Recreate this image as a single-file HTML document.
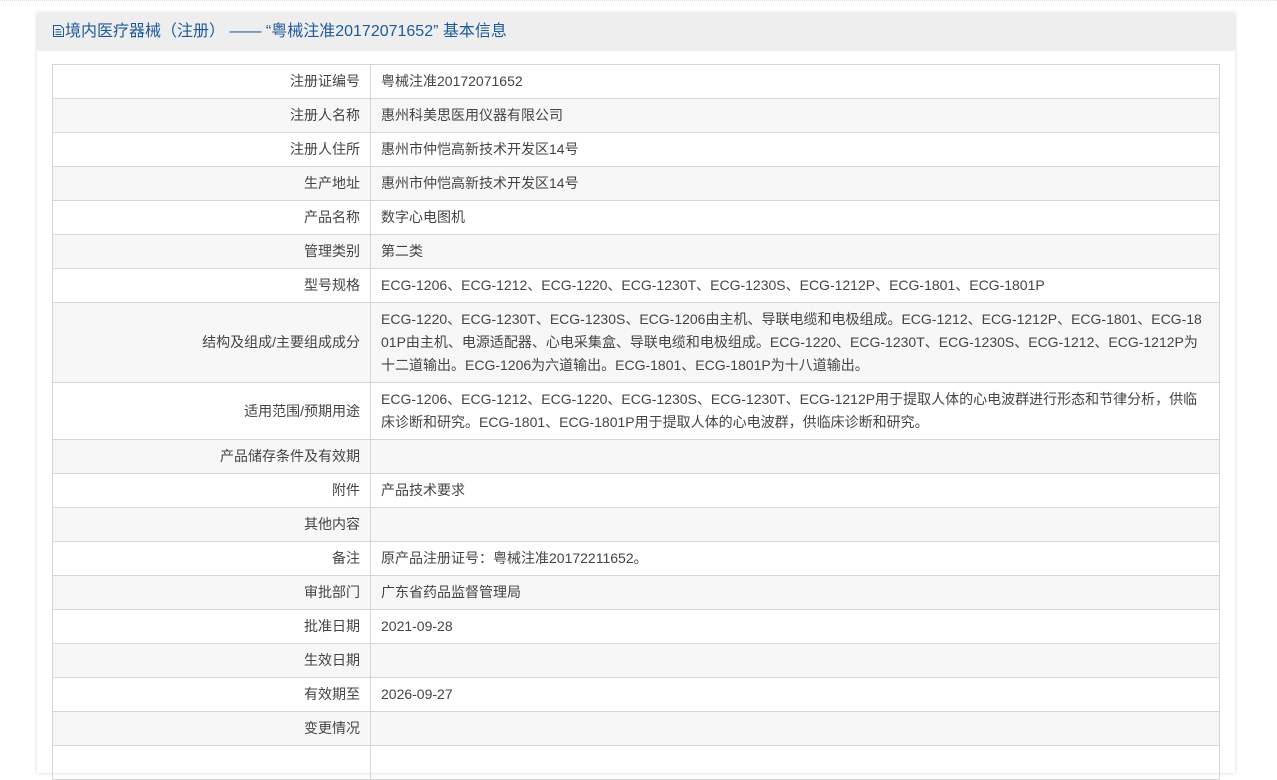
<!DOCTYPE html>
<html><head><meta charset="utf-8"><style>
html,body{margin:0;padding:0;background:#fff;}
body{width:1277px;height:751px;overflow:hidden;position:relative;font-family:"Liberation Sans","Noto Sans CJK SC",sans-serif;font-size:14px;color:#444;}
.top{position:absolute;left:0;top:0;width:1277px;border-top:1px dotted #ddd;}
.panel{position:absolute;left:37px;top:13px;width:1198px;height:760px;background:#fff;box-shadow:0 0 4px rgba(0,0,0,.15);}
.hd{height:38px;background:#eeeeee;color:#1c5a9c;font-size:16px;line-height:38px;padding-left:15px;}
table{position:absolute;left:15px;top:51px;width:1168px;border-collapse:collapse;}
td{border:1px solid #d6d6d6;padding:5px 10px;line-height:23px;vertical-align:middle;}
td.l{width:297px;text-align:right;padding-right:10px;}
tr:nth-child(even) td{background:#f7f7f7;}
tr.s td{height:23px;}
</style></head><body>
<div class="top"></div>
<div class="panel">
<div class="hd"><svg width="13" height="14" viewBox="0 0 13 14" style="vertical-align:-2px"><path d="M1.5 1.5h7l3 3v8h-10z" fill="none" stroke="#1c5a9c"/><path d="M3.5 5.5h5M3.5 8h6M3.5 10.5h6" stroke="#1c5a9c"/></svg>境内医疗器械（注册） —— “粤械注准20172071652” 基本信息</div>
<table>
<tr class="s"><td class="l">注册证编号</td><td>粤械注准20172071652</td></tr>
<tr class="s"><td class="l">注册人名称</td><td>惠州科美思医用仪器有限公司</td></tr>
<tr class="s"><td class="l">注册人住所</td><td>惠州市仲恺高新技术开发区14号</td></tr>
<tr class="s"><td class="l">生产地址</td><td>惠州市仲恺高新技术开发区14号</td></tr>
<tr class="s"><td class="l">产品名称</td><td>数字心电图机</td></tr>
<tr class="s"><td class="l">管理类别</td><td>第二类</td></tr>
<tr class="s"><td class="l">型号规格</td><td>ECG-1206、ECG-1212、ECG-1220、ECG-1230T、ECG-1230S、ECG-1212P、ECG-1801、ECG-1801P</td></tr>
<tr><td class="l">结构及组成/主要组成成分</td><td style="white-space:nowrap">ECG-1220、ECG-1230T、ECG-1230S、ECG-1206由主机、导联电缆和电极组成。ECG-1212、ECG-1212P、ECG-1801、ECG-18<br>01P由主机、电源适配器、心电采集盒、导联电缆和电极组成。ECG-1220、ECG-1230T、ECG-1230S、ECG-1212、ECG-1212P为<br>十二道输出。ECG-1206为六道输出。ECG-1801、ECG-1801P为十八道输出。</td></tr>
<tr><td class="l">适用范围/预期用途</td><td style="white-space:nowrap">ECG-1206、ECG-1212、ECG-1220、ECG-1230S、ECG-1230T、ECG-1212P用于提取人体的心电波群进行形态和节律分析，供临<br>床诊断和研究。ECG-1801、ECG-1801P用于提取人体的心电波群，供临床诊断和研究。</td></tr>
<tr class="s"><td class="l">产品储存条件及有效期</td><td></td></tr>
<tr class="s"><td class="l">附件</td><td>产品技术要求</td></tr>
<tr class="s"><td class="l">其他内容</td><td></td></tr>
<tr class="s"><td class="l">备注</td><td>原产品注册证号：粤械注准20172211652。</td></tr>
<tr class="s"><td class="l">审批部门</td><td>广东省药品监督管理局</td></tr>
<tr class="s"><td class="l">批准日期</td><td>2021-09-28</td></tr>
<tr class="s"><td class="l">生效日期</td><td></td></tr>
<tr class="s"><td class="l">有效期至</td><td>2026-09-27</td></tr>
<tr class="s"><td class="l">变更情况</td><td></td></tr>
<tr class="s"><td class="l"></td><td></td></tr>
</table>
</div>
</body></html>
